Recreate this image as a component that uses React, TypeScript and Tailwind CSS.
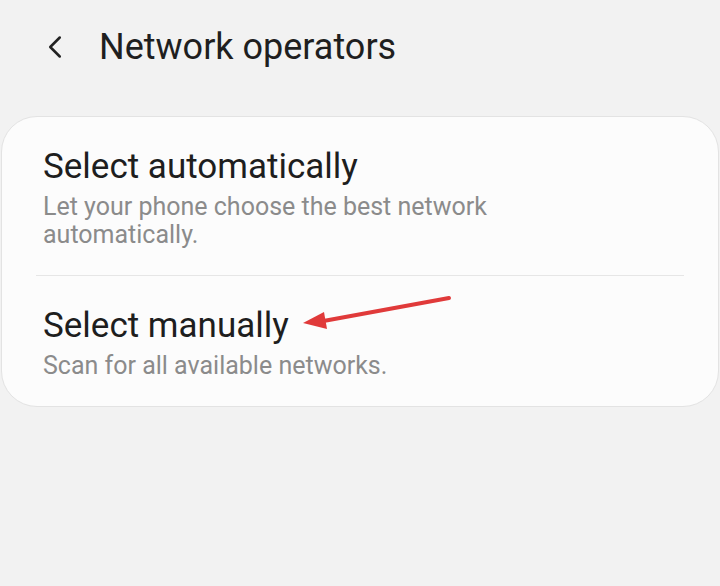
import { ChevronLeft } from 'lucide-react';

const options = [
  {
    title: 'Select automatically',
    desc: 'Let your phone choose the best network automatically.',
  },
  {
    title: 'Select manually',
    desc: 'Scan for all available networks.',
  },
];

export default function App() {
  return (
    <div
      className="w-[720px] h-[586px] bg-[#f2f2f2] overflow-hidden"
      style={{ fontFamily: 'Roboto, "Noto Sans", sans-serif' }}
    >
      {/* Header */}
      <div className="flex items-center h-[92px] pl-[36px] pt-[2px]">
        <ChevronLeft className="w-[38px] h-[38px] text-[#222]" strokeWidth={1.6} />
        <h1 className="ml-[25px] text-[36px] leading-[40px] text-[#1f1f1f]">
          Network operators
        </h1>
      </div>

      {/* Options card */}
      <div className="relative mt-[24px] mx-[1px] bg-[#fcfcfc] border border-[#e3e3e3] rounded-[36px]">
        {options.map((opt, i) => (
          <div key={opt.title}>
            {i > 0 && <div className="mx-[34px] h-px bg-[#e6e6e6]" />}
            <div className="px-[41px] pt-[30px] pb-[26px]">
              <div className="text-[35px] leading-[40px] text-[#1e1e1e]">{opt.title}</div>
              <div className="mt-[6px] max-w-[480px] text-[25px] leading-[28px] text-[#8b8b8b]">
                {opt.desc}
              </div>
            </div>
          </div>
        ))}

        {/* annotation arrow */}
        <svg
          className="absolute left-[296px] top-[171px]"
          width="160"
          height="50"
          viewBox="0 0 160 50"
        >
          <line x1="151" y1="10" x2="20" y2="34" stroke="#e03a3a" strokeWidth="4" strokeLinecap="round" />
          <polygon points="5,35 26,24 29,41" fill="#e03a3a" />
        </svg>
      </div>
    </div>
  );
}
